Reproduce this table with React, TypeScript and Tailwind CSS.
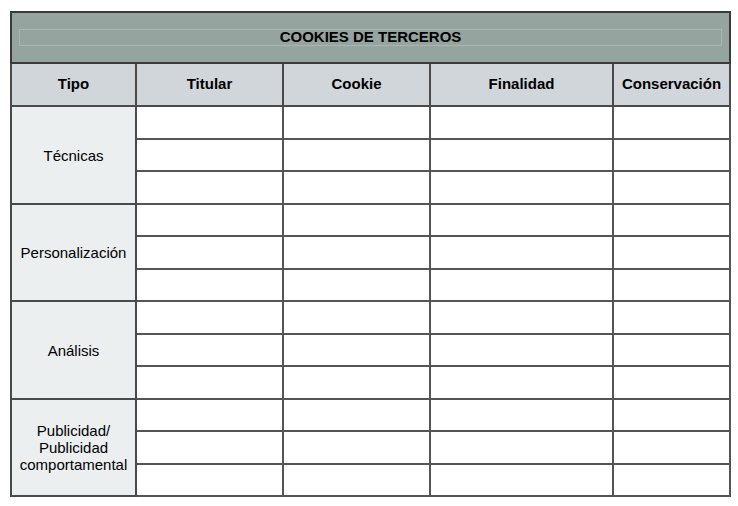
const GROUPS = [
  { label: ["Técnicas"], rows: [33, 32, 33] },
  { label: ["Personalización"], rows: [32, 33, 32] },
  { label: ["Análisis"], rows: [33, 32, 33] },
  { label: ["Publicidad/", "Publicidad", "comportamental"], rows: [32, 33, 32] },
];

const COLS = ["Titular", "Cookie", "Finalidad", "Conservación"];

export default function App() {
  return (
    <div className="w-[738px] h-[506px] bg-white pt-[11px] pl-[10px] font-['Liberation_Sans',Arial,sans-serif] text-black">
      <table className="w-[719px] table-fixed border-collapse border-2 border-[#3a3a3a]">
        <colgroup>
          <col className="w-[125px]" />
          <col className="w-[147px]" />
          <col className="w-[147px]" />
          <col className="w-[183px]" />
          <col className="w-[117px]" />
        </colgroup>
        <thead>
          <tr className="h-[51px]">
            <th colSpan={5} className="bg-[#96a4a0] border-2 border-[#3a3a3a] p-0">
              <div className="mx-[7px] h-[17px] border border-[#a9b6b2] flex items-center justify-center text-[15px] font-bold">
                COOKIES DE TERCEROS
              </div>
            </th>
          </tr>
          <tr className="h-[43px]">
            <th className="bg-[#d1d6da] border-2 border-[#4a4a4a] text-[15px] font-bold">Tipo</th>
            {COLS.map((c) => (
              <th key={c} className="bg-[#d1d6da] border-2 border-[#4a4a4a] text-[15px] font-bold">
                {c}
              </th>
            ))}
          </tr>
        </thead>
        <tbody>
          {GROUPS.map((g) =>
            g.rows.map((h, i) => (
              <tr key={g.label[0] + i} style={{ height: h }}>
                {i === 0 && (
                  <td
                    rowSpan={3}
                    className="bg-[#eceff0] border-2 border-[#4a4a4a] text-center text-[15px] leading-[17px] align-middle"
                  >
                    {g.label.map((l) => (
                      <div key={l}>{l}</div>
                    ))}
                  </td>
                )}
                {COLS.map((c) => (
                  <td key={c} className="border-2 border-[#555555] bg-white" />
                ))}
              </tr>
            ))
          )}
        </tbody>
      </table>
    </div>
  );
}
